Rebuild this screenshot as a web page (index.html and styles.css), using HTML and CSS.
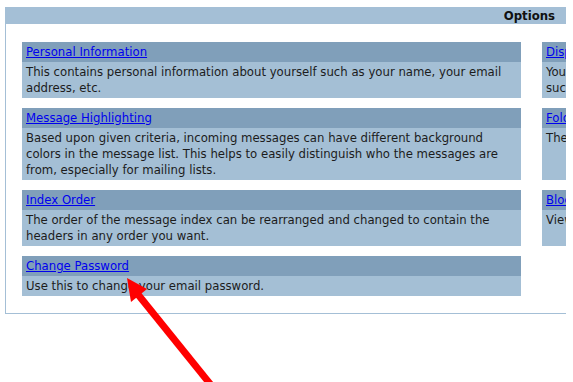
FILE: index.html
```html
<!DOCTYPE html>
<html lang="en">
<head>
  <meta charset="UTF-8" />
  <title>Options</title>
  <link rel="stylesheet" href="styles.css">
</head>
<body>
  <div class="page">
    <div class="options">
      <div class="title-bar">Options</div>
      <div class="grid">
        <div class="card">
          <div class="card-head"><a href="#">Personal Information</a></div>
          <div class="card-body">This contains personal information about yourself such as your name, your email address, etc.</div>
        </div>
        <div class="card">
          <div class="card-head"><a href="#">Display Preferences</a></div>
          <div class="card-body">You can change the way that SquirrelMail looks and displays information to you, such as the colors, the language, and other settings.</div>
        </div>
        <div class="card">
          <div class="card-head"><a href="#">Message Highlighting</a></div>
          <div class="card-body">Based upon given criteria, incoming messages can have different background colors in the message list. This helps to easily distinguish who the messages are from, especially for mailing lists.</div>
        </div>
        <div class="card">
          <div class="card-head"><a href="#">Folder Preferences</a></div>
          <div class="card-body">These settings change the way your folders are displayed and manipulated.</div>
        </div>
        <div class="card">
          <div class="card-head"><a href="#">Index Order</a></div>
          <div class="card-body">The order of the message index can be rearranged and changed to contain the headers in any order you want.</div>
        </div>
        <div class="card">
          <div class="card-head"><a href="#">Blocked Senders</a></div>
          <div class="card-body">View and edit the list of senders whose mail is blocked.</div>
        </div>
        <div class="card">
          <div class="card-head"><a href="#">Change Password</a></div>
          <div class="card-body">Use this to change your email password.</div>
        </div>
      </div>
    </div>

    <!-- red pointer arrow drawn over the page -->
    <svg class="arrow" width="573" height="382" viewBox="0 0 573 382">
      <line x1="215" y1="390" x2="136" y2="292" stroke="#f00" stroke-width="7"/>
      <polygon points="127,278 147,289 131,302" fill="#f00"/>
    </svg>
  </div>
</body>
</html>
```

FILE: styles.css
```css
body {
  margin: 0;
  background: #fff;
  font-family: Tahoma, "DejaVu Sans Condensed", sans-serif;
  font-size: 13px;
  color: #1c1c1c;
}
.page {
  position: relative;
  height: 382px;
  overflow: hidden;
}
.options {
  margin: 7px 0 0 5px;
  width: 561px;
  height: 307px;
  border-left: 1px solid #a4bfd6;
  border-bottom: 1px solid #a4bfd6;
  overflow: hidden;
  box-sizing: border-box;
}
.title-bar {
  background: #a4bfd6;
  height: 17px;
  line-height: 18px;
  text-align: right;
  font-weight: bold;
  padding-right: 11px;
  color: #111;
  margin-left: -1px;
}
.grid {
  display: grid;
  grid-template-columns: 499px 499px;
  column-gap: 21px;
  row-gap: 10px;
  padding: 18px 0 0 16px;
}
.card {
  background: #a4bfd5;
}
.card-head {
  background: #809fba;
  padding: 2px 4px;
  line-height: 16px;
}
.card-head a {
  color: #0000ee;
}
.card-body {
  padding: 2px 8px 2px 4px;
  line-height: 16px;
}
.arrow {
  position: absolute;
  top: 0;
  left: 0;
  pointer-events: none;
}
```
